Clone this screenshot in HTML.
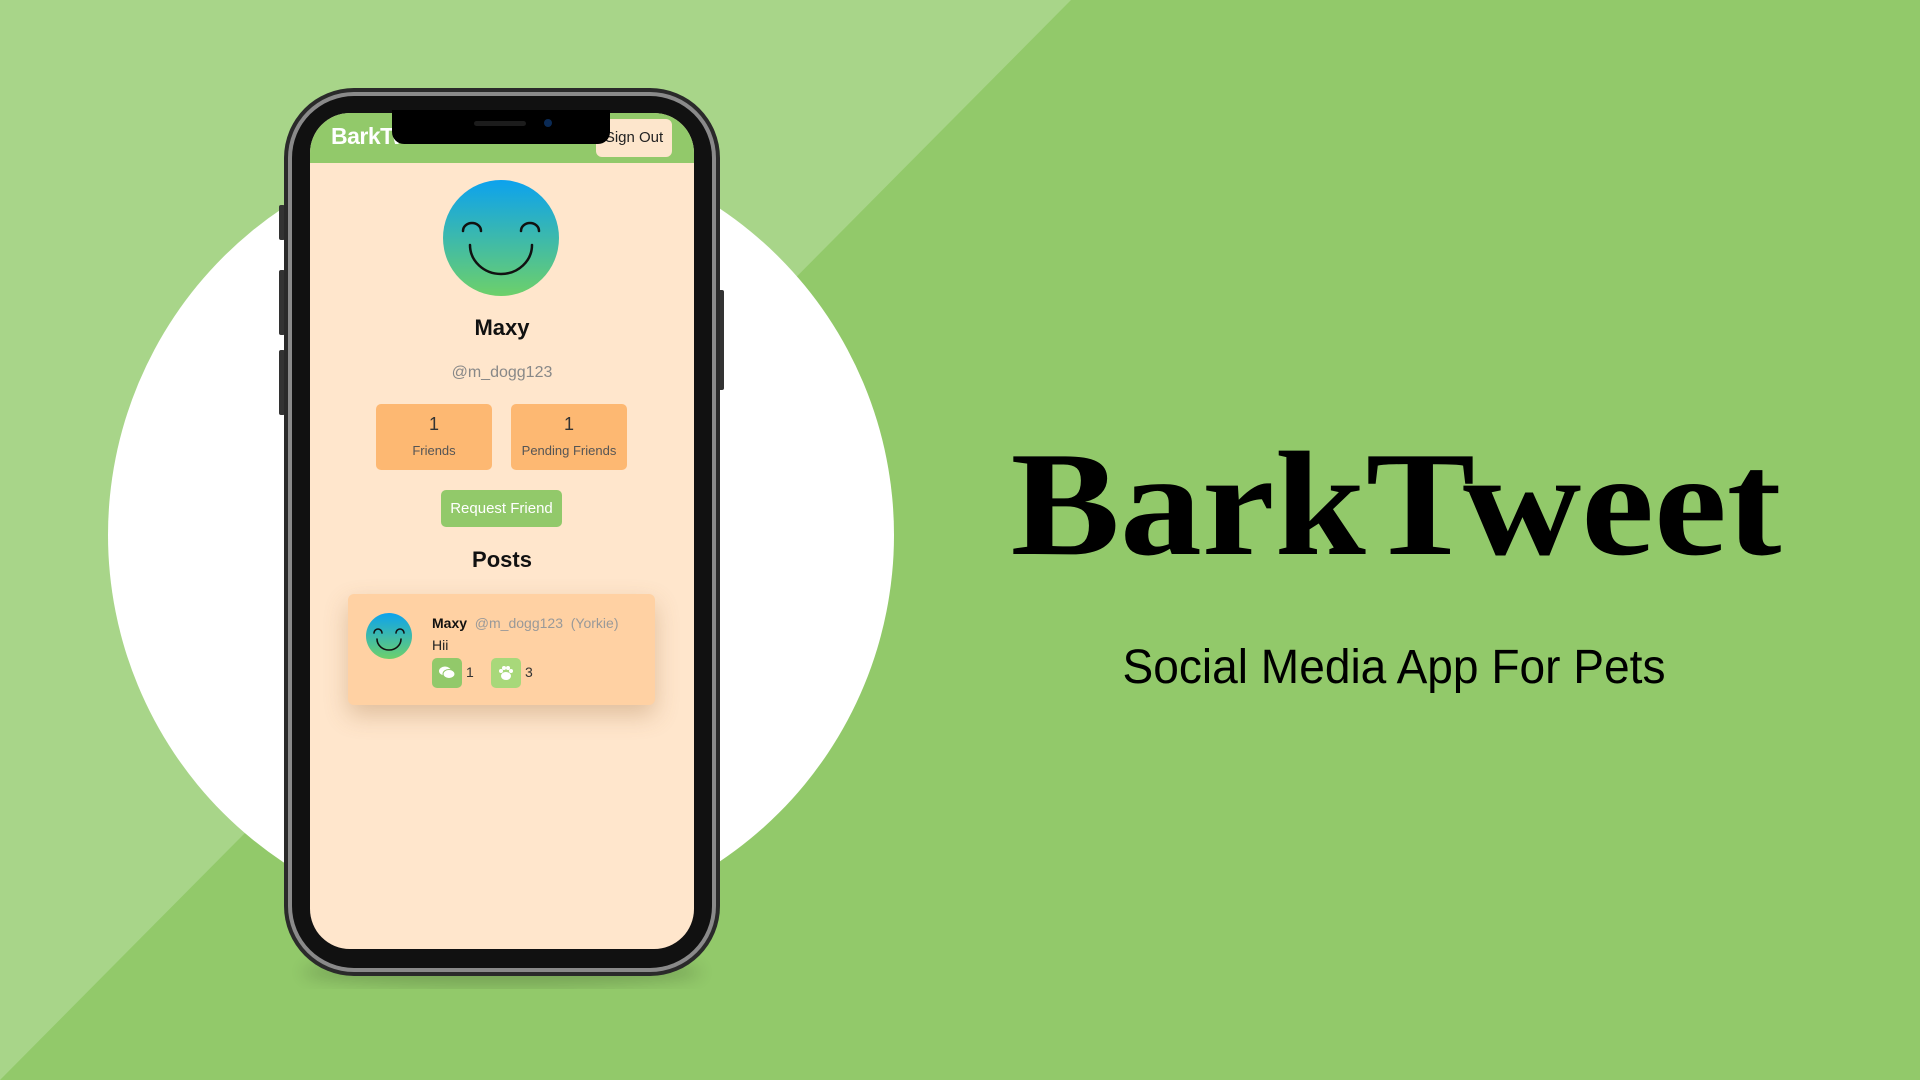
<!DOCTYPE html>
<html><head><meta charset="utf-8"><style>
*{margin:0;padding:0;box-sizing:border-box}
body{width:1920px;height:1080px;overflow:hidden;position:relative;background:#92c96a;font-family:"Liberation Sans",sans-serif}
.abs{position:absolute}
</style></head><body>
<svg class="abs" style="left:0;top:0" width="1920" height="1080">
<polygon points="0,0 1071,0 0,1080" fill="#a8d589"/>
<circle cx="501" cy="535" r="393" fill="#fff"/>
<ellipse cx="502" cy="972" rx="200" ry="14" fill="#000" opacity=".18" filter="url(#b)"/>
<defs><filter id="b"><feGaussianBlur stdDeviation="8"/></filter>
<linearGradient id="g" x1="0" y1="0" x2="0" y2="1"><stop offset="0" stop-color="#0ca2ee"/><stop offset="1" stop-color="#6dd06a"/></linearGradient></defs>
<rect x="279" y="205" width="6" height="35" rx="2" fill="#333"/>
<rect x="279" y="270" width="6" height="65" rx="2" fill="#333"/>
<rect x="279" y="350" width="6" height="65" rx="2" fill="#333"/>
<rect x="718" y="290" width="6" height="100" rx="2" fill="#333"/>
<rect x="284" y="88" width="436" height="888" rx="70" fill="#2a2a2a"/>
<rect x="288" y="92" width="428" height="880" rx="66" fill="#8a8a8a"/>
<rect x="292" y="96" width="420" height="872" rx="62" fill="#111"/>
<rect x="310" y="113" width="384" height="836" rx="40" fill="#ffe6cc"/>
<path d="M350,113 H654 A40,40 0 0 1 694,153 V163 H310 V153 A40,40 0 0 1 350,113Z" fill="#92c96a"/>
</svg>
<div class="abs" style="left:331px;top:123px;color:#fff;font-weight:bold;font-size:23px;letter-spacing:-0.5px">BarkTweet</div>
<div class="abs" style="left:596px;top:119px;width:76px;height:38px;background:#fde6cc;border-radius:6px;font-size:15px;color:#222;line-height:38px;text-align:center">Sign Out</div>
<svg class="abs" style="left:0;top:0" width="1920" height="1080">
<path d="M392,110 H610 V132 A12,12 0 0 1 598,144 H404 A12,12 0 0 1 392,132Z" fill="#000"/>
<rect x="474" y="121" width="52" height="5" rx="2.5" fill="#1c1c1c"/>
<circle cx="548" cy="123" r="4" fill="#0a2a55"/>
<circle cx="501" cy="238" r="58" fill="url(#g)"/>
<path d="M463,231 a9,8 0 0 1 18,0 M521,231 a9,8 0 0 1 18,0 M470,245 a31,29 0 0 0 62,0" fill="none" stroke="#111" stroke-width="2.5" stroke-linecap="round"/>
</svg>
<div class="abs" style="left:310px;top:315px;width:384px;text-align:center;font-weight:bold;font-size:22px;color:#111">Maxy</div>
<div class="abs" style="left:310px;top:364px;width:384px;text-align:center;font-size:16px;color:#888">@m_dogg123</div>
<div class="abs" style="left:376px;top:404px;width:116px;height:66px;background:#fdb872;border-radius:5px;text-align:center;color:#333">
<div style="font-size:18px;margin-top:10px">1</div><div style="font-size:13px;margin-top:8px;color:#555">Friends</div></div>
<div class="abs" style="left:511px;top:404px;width:116px;height:66px;background:#fdb872;border-radius:5px;text-align:center;color:#333">
<div style="font-size:18px;margin-top:10px">1</div><div style="font-size:13px;margin-top:8px;color:#555">Pending Friends</div></div>
<div class="abs" style="left:441px;top:490px;width:121px;height:37px;background:#92c96a;border-radius:5px;color:#fff;font-size:15px;line-height:37px;text-align:center">Request Friend</div>
<div class="abs" style="left:310px;top:547px;width:384px;text-align:center;font-weight:bold;font-size:22px;color:#111">Posts</div>
<div class="abs" style="left:348px;top:594px;width:307px;height:111px;background:#ffd1a3;border-radius:6px;box-shadow:0 10px 24px rgba(150,100,50,.3)">
<svg class="abs" style="left:17px;top:18px" width="48" height="48"><circle cx="24" cy="24" r="23" fill="url(#g2)"/><defs><linearGradient id="g2" x1="0" y1="0" x2="0" y2="1"><stop offset="0" stop-color="#0ca2ee"/><stop offset="1" stop-color="#6dd06a"/></linearGradient></defs><path d="M9,21 a4,4 0 0 1 8,0 M31,21 a4,4 0 0 1 8,0 M12,27 a12,11 0 0 0 24,0" fill="none" stroke="#111" stroke-width="1.6" stroke-linecap="round"/></svg>
<div class="abs" style="left:84px;top:21px;font-size:14px;color:#999;white-space:nowrap"><b style="color:#111">Maxy</b>&nbsp; @m_dogg123 &nbsp;(Yorkie)</div>
<div class="abs" style="left:84px;top:43px;font-size:14px;color:#222">Hii</div>
<div class="abs" style="left:84px;top:64px;width:30px;height:30px;background:#92c96a;border-radius:5px"></div>
<svg class="abs" style="left:90px;top:71px" width="18" height="16"><ellipse cx="7" cy="6" rx="6" ry="4.5" fill="#fff"/><ellipse cx="11" cy="9" rx="6" ry="4.5" fill="#fff" stroke="#92c96a" stroke-width="1"/></svg>
<div class="abs" style="left:118px;top:70px;font-size:14px;color:#333">1</div>
<div class="abs" style="left:143px;top:64px;width:30px;height:30px;background:#a8d87a;border-radius:5px"></div>
<svg class="abs" style="left:149px;top:70px" width="18" height="18"><ellipse cx="9" cy="12" rx="5" ry="4" fill="#fff"/><circle cx="4" cy="7" r="2" fill="#fff"/><circle cx="7" cy="4" r="2" fill="#fff"/><circle cx="11" cy="4" r="2" fill="#fff"/><circle cx="14" cy="7" r="2" fill="#fff"/></svg>
<div class="abs" style="left:177px;top:70px;font-size:14px;color:#333">3</div>
</div>
<div class="abs" style="left:1396px;top:430px;transform:translateX(-50%) scaleX(1.1);font-family:'Liberation Serif',serif;font-weight:bold;font-size:149px;line-height:1;color:#000;white-space:nowrap">BarkTweet</div>
<div class="abs" style="left:1394px;top:644px;transform:translateX(-50%) scaleX(.96);font-size:48px;line-height:1;color:#000;white-space:nowrap">Social Media App For Pets</div>
</body></html>
